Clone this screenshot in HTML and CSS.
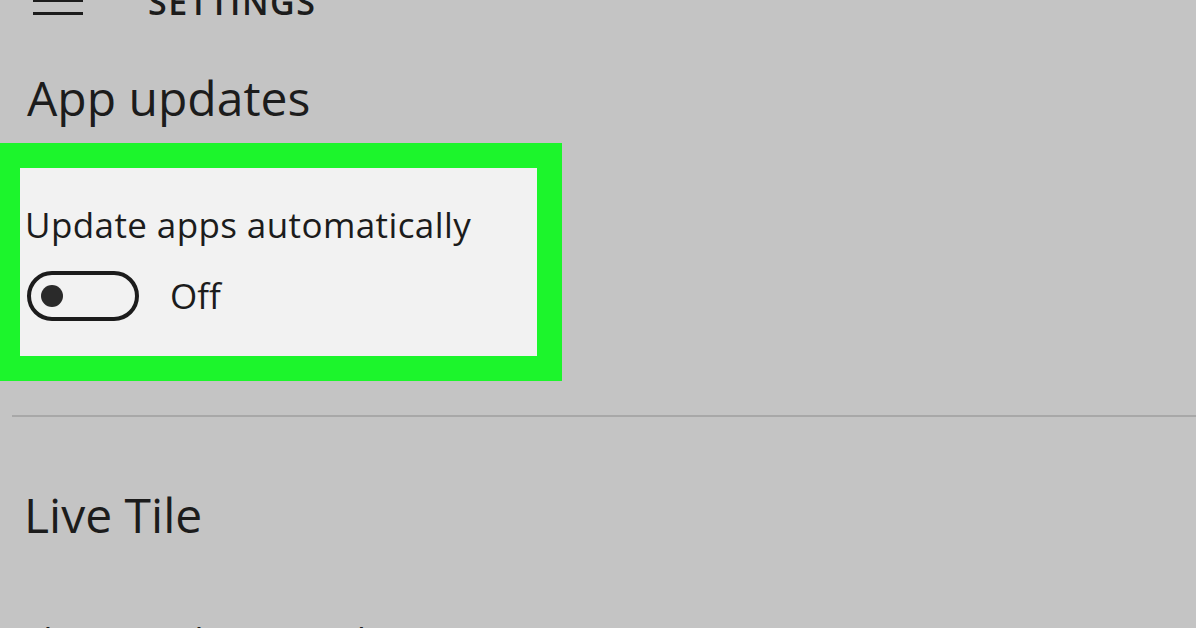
FILE: index.html
```html
<!DOCTYPE html>
<html lang="en">
<head>
<meta charset="utf-8">
<title>Settings</title>
<link rel="stylesheet" href="styles.css">
</head>
<body>
<div class="page">
  <header class="topbar">
    <span class="hamburger"><i></i><i></i><i></i></span>
    <span class="title">SETTINGS</span>
  </header>

  <h2 class="section-title first">App updates</h2>

  <div class="highlight">
    <div class="setting">
      <div class="label">Update apps automatically</div>
      <div class="toggle-row">
        <span class="toggle"><span class="knob"></span></span>
        <span class="state">Off</span>
      </div>
    </div>
  </div>

  <div class="divider"></div>

  <h2 class="section-title second">Live Tile</h2>
  <div class="label bottom">Show products on tile</div>
</div>
</body>
</html>
```

FILE: styles.css
```css
html, body {
  margin: 0;
  padding: 0;
  background: #c4c4c4;
  overflow: hidden;
}

.page {
  width: 1196px;
  height: 628px;
  overflow: hidden;
  font-family: "Open Sans", "Noto Sans", sans-serif;
  color: #1c1c1c;
  background: #c4c4c4;
}

.topbar {
  display: flex;
  align-items: flex-start;
  margin-top: -14px;
  height: 30px;
}

.hamburger {
  display: flex;
  flex-direction: column;
  gap: 10px;
  margin-left: 33px;
  width: 50px;
}

.hamburger i {
  display: block;
  height: 3px;
  background: #1c1c1c;
}

.title {
  margin-left: 65px;
  padding-top: 1px;
  font-size: 34px;
  line-height: 30px;
  font-weight: 600;
  letter-spacing: 1.5px;
}

.section-title {
  margin: 0;
  margin-left: 27px;
  font-size: 48px;
  line-height: 56px;
  font-weight: 400;
}

.section-title.first {
  margin-top: 54px;
}

.section-title.second {
  margin-top: 70px;
  margin-left: 24px;
}

.highlight {
  margin-top: 17px;
  width: 517px;
  height: 188px;
  border-style: solid;
  border-color: #1cf52c;
  border-width: 25px 25px 25px 20px;
}

.setting {
  height: 100%;
  background: #f2f2f2;
  padding: 37px 0 0 5px;
  box-sizing: border-box;
}

.label {
  font-size: 35px;
  line-height: 40px;
  letter-spacing: 0.4px;
}

.toggle-row {
  display: flex;
  align-items: center;
  margin-top: 26px;
  margin-left: 2px;
  gap: 31px;
}

.toggle {
  display: flex;
  align-items: center;
  width: 112px;
  height: 50px;
  box-sizing: border-box;
  border: 4px solid #1c1c1c;
  border-radius: 25px;
  padding-left: 10px;
}

.knob {
  width: 22px;
  height: 22px;
  border-radius: 50%;
  background: #2a2a2a;
}

.state {
  font-size: 35px;
  line-height: 40px;
}

.divider {
  margin-top: 34px;
  margin-left: 12px;
  height: 2px;
  background: #a8a8a8;
}

.label.bottom {
  margin-top: 77px;
  margin-left: 24px;
}
```
